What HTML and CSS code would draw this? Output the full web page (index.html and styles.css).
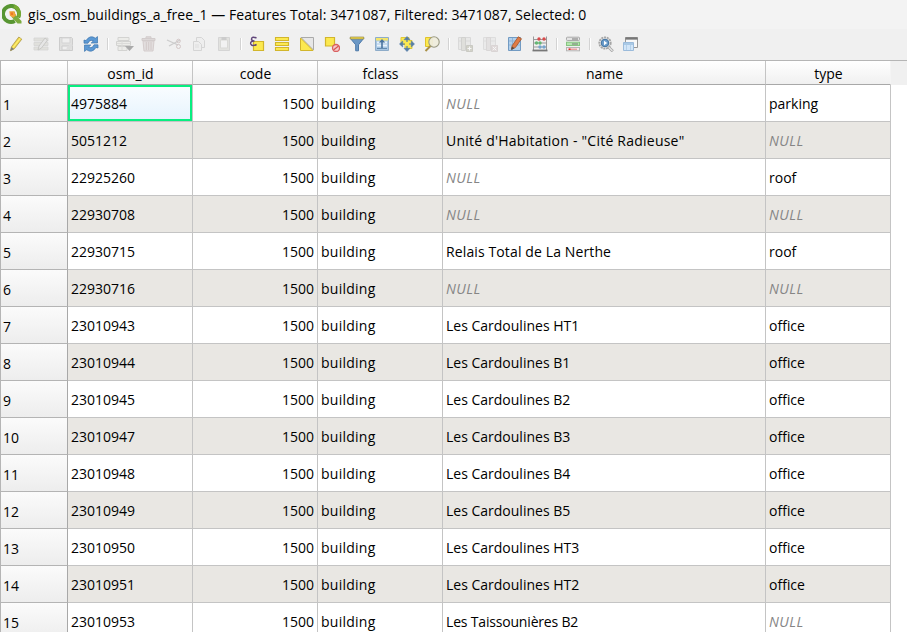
FILE: index.html
```
<!DOCTYPE html>
<html lang="en">
<head>
<meta charset="utf-8">
<title>gis_osm_buildings_a_free_1</title>
<link rel="stylesheet" href="styles.css">
</head>
<body>
<header class="titlebar">
<svg class="logo" width="20" height="20" viewBox="0 0 20 20"><path d="M16.2 13.5A8 8 0 1 0 12.8 17" fill="none" stroke="#589632" stroke-width="3.9"/><path d="M16.5 13A8 8 0 0 0 12 2.2" fill="none" stroke="#78aa35" stroke-width="3.5"/><path d="M8 8l5-.2-.3 2.2 6.8 7v2.5h-4L9.8 13.2z" fill="#7bab3e"/><path d="M7.3 7.3h5l1 2.5 1 1.2-3 2.8-3.4-2z" fill="#f1a23a"/><path d="M8.5 8.5h2.5v2.5H9z" fill="#ee7924"/></svg>
<h1>gis_osm_buildings_a_free_1 — Features Total: 3471087, Filtered: 3471087, Selected: 0</h1>
</header>
<nav class="toolbar">
<span class="tool"><svg viewBox="0 0 16 16"><path d="M2.5 14.7l1-4L10.8 1l3 2.2-7.4 9.5z" fill="#eed54b" stroke="#ab9745" stroke-width=".8"/><path d="M5 11.7l7.2-9.3" stroke="#fff071" stroke-width="1.2"/><path d="M2.3 15l1.1-4 2.7 2z" fill="#808078"/></svg></span>
<span class="tool off"><svg viewBox="0 0 16 16"><path d="M1 2h14v3H1zM1 6.5h14v3H1zM1 11h14v3H1z" fill="#d2d2c9" stroke="#bbb" stroke-width=".8"/><path d="M5 14l1-4 6-8 2.5 2-6 8z" fill="#ddd" stroke="#a2a29d"/></svg></span>
<span class="tool off"><svg viewBox="0 0 16 16"><path d="M1.5 1.5h12l1 1v12h-13z" fill="#d1d1cf" stroke="#aaa"/><path d="M4 2h8v5H4z" fill="#eee" stroke="#bbb"/><path d="M4 10h7v4H4z" fill="#eee" stroke="#aaa"/><path d="M8 14l1-3 4-3 2 1-4 5z" fill="#ccc"/></svg></span>
<span class="tool"><svg viewBox="0 0 16 16"><path d="M1 7.2V4L3 4.6Q7-1.6 12.4 2.2L14.5.6V7H8.2l2.2-2.1Q6.5 3.2 5 7.2z" fill="#5c99d4" stroke="#3d76ae" stroke-width=".7"/><path d="M15 8.8V12l-2-.6Q9 17.6 3.6 13.8L1.5 15.4V9h6.3l-2.2 2.1q3.9 1.7 5.4-2.3z" fill="#5c99d4" stroke="#3d76ae" stroke-width=".7"/></svg></span>
<i class="sep"></i>
<span class="tool off"><svg viewBox="0 0 16 16"><path d="M2 1.5h11v3H2zM.5 5.5h14v4H.5zM2 10.5h9v4H2z" fill="#e9e9e4" stroke="#b8b8b4"/><path d="M6 5v9M1 7.5h13" stroke="#c8c8c4"/></svg><svg class="caret" viewBox="0 0 9 6"><path d="M0 0h9L4.5 5z" fill="#666"/></svg></span>
<span class="tool off"><svg viewBox="0 0 16 16"><path d="M2 5h11l-1 10H3z" fill="#d5cdcd" stroke="#b9a9a9"/><path d="M1 2.5h13v2H1zM5 2V.8h5V2" fill="#ccc1c1" stroke="#b5a9a9"/><path d="M5.3 6v8M7.7 6v8M10 6v8" stroke="#b5a4a4"/></svg></span>
<span class="tool off"><svg viewBox="0 0 16 16"><path d="M1 4l11 5M3 10l11-6" stroke="#aaa" stroke-width="1.3"/><circle cx="12.5" cy="5" r="1.8" fill="none" stroke="#b8a0a0"/><circle cx="12.5" cy="10.5" r="2" fill="none" stroke="#b8a0a0"/></svg></span>
<span class="tool off"><svg viewBox="0 0 16 16"><path d="M5.5 1.5h5l3 3v7h-8z" fill="#eee" stroke="#bbb"/><path d="M2.5 5.5h5l3 3v6h-8z" fill="#eee" stroke="#bbb"/><path d="M4 9h4M4 11h4" stroke="#ccc"/></svg></span>
<span class="tool off"><svg viewBox="0 0 16 16"><path d="M2.5 1.5h11v13h-11z" fill="#d5d5cf" stroke="#bbb"/><path d="M4.5 4h7v8h-7z" fill="#f4f4f4" stroke="#c5c5c0"/><path d="M5.5 1h5v3h-5z" fill="#aaa"/></svg></span>
<i class="sep"></i>
<span class="tool"><svg viewBox="0 0 16 16"><path d="M4.5 5.5h10v9h-10z" fill="#fce94f" stroke="#d2b62c" stroke-width="1.2"/><path d="M7.5 2Q3 0 2.5 3q0 2 3 2Q1 5 1.8 8q1.2 2.8 5.8.5" fill="none" stroke="#60467a" stroke-width="1.5"/></svg></span>
<span class="tool"><svg viewBox="0 0 16 16"><path d="M1.5 1.5h13v3h-13zM1.5 6.5h13v3h-13zM1.5 11.5h13v3h-13z" fill="#fce94f" stroke="#d2b62c" stroke-width="1.1"/></svg></span>
<span class="tool"><svg viewBox="0 0 16 16"><path d="M2 1.5h12.5V14z" fill="#e7e7e7" stroke="#aaa"/><path d="M1.5 2v12.5H14z" fill="#fce94f" stroke="#d2b62c"/></svg></span>
<span class="tool"><svg viewBox="0 0 16 16"><path d="M1.5 1.5h9v8.5h-9z" fill="#fce94f" stroke="#d2b62c" stroke-width="1.2"/><circle cx="12" cy="12" r="3.5" fill="#f4caca" stroke="#d96060" stroke-width="1.3"/><path d="M9.5 14l5-4" stroke="#d65454" stroke-width="1.3"/></svg></span>
<span class="tool"><svg viewBox="0 0 16 16"><path d="M1 2l5.7 6.8v6h2.8v-6L15 2z" fill="#6b98c6" stroke="#4d79a9"/><path d="M1.2 1h13.6v2H1.2z" fill="#f3da45" stroke="#92884e" stroke-width=".7"/></svg></span>
<span class="tool"><svg viewBox="0 0 16 16"><path d="M1.5 1.5h13v13h-13z" fill="#a7c6e4" stroke="#8eacc9"/><path d="M2 2h12v2.5H2z" fill="#f4e56b"/><path d="M3 6.5h10M3 9.5h10" stroke="#e9f3fb" stroke-width="1.8"/><path d="M7.2 12V6.5H4.8L8 3l3.2 3.5H8.8V12z" fill="#49739f"/><path d="M3 12.5h10" stroke="#648caf"/></svg></span>
<span class="tool"><svg viewBox="0 0 16 16"><path d="M2 1.5h8v3h3v8H6v-4H2z" fill="#fce94f" stroke="#e0c936"/><path d="M8 .5l3 3.2H5zM8 15.5l3-3.2H5zM.5 8l3.2-3v6zM15.5 8l-3.2-3v6z" fill="#547da8" stroke="#547da8" stroke-width=".6"/><path d="M8 3v10M3 8h10" stroke="#547da8" stroke-width="1.2"/><path d="M6 6h4v4H6z" fill="#fce94f"/></svg></span>
<span class="tool"><svg viewBox="0 0 16 16"><path d="M1.5 1.5h7v9h-7z" fill="#fce94f" stroke="#e0c22c"/><path d="M6.5 10L1.5 15" stroke="#a99046" stroke-width="2"/><circle cx="10" cy="6" r="5.2" fill="#eeecdc" fill-opacity=".95" stroke="#999983" stroke-width="1.1"/></svg></span>
<i class="sep"></i>
<span class="tool off"><svg viewBox="0 0 16 16"><path d="M1.5 1.5h12v12h-12zM2 5h11" fill="#e2e2e0" stroke="#c4c4c4"/><path d="M4.5 1.5h4v13h-4z" fill="#cfcfc7" stroke="#b4b4b0"/><path d="M9.5 9.5h6v6h-6z" fill="#b5b5a4" stroke="#a5a598"/><path d="M12.5 10.5v4M10.5 12.5h4" stroke="#fff"/></svg></span>
<span class="tool off"><svg viewBox="0 0 16 16"><path d="M1.5 1.5h12v12h-12zM2 5h11" fill="#e6e6e6" stroke="#ccc"/><path d="M4.5 1.5h4v13h-4z" fill="#d8d4d4" stroke="#c4bfbf"/><path d="M9.5 9.5h6v6h-6z" fill="#cfc3c3" stroke="#c4b9b9"/><path d="M10.8 10.8l3.5 3.5M14.3 10.8l-3.5 3.5" stroke="#fff"/></svg></span>
<span class="tool"><svg viewBox="0 0 16 16"><path d="M1.5 1.5h12v13h-12z" fill="#b2d0ec" stroke="#729bc3"/><path d="M5.5 2v12M2 5h11M2 9h11" stroke="#8fb3d6"/><path d="M4.5 13l.7-3.3L11.3.8l3.2 2L8.3 11.6z" fill="#e07b45" stroke="#a75930" stroke-width=".9"/><path d="M4 14.2l.9-3.6 2.6 1.6z" fill="#554b46"/></svg></span>
<span class="tool"><svg viewBox="0 0 16 16"><path d="M1.5.5v14h13V.5M1 3.5h14M1 7h14M1 11h14" fill="none" stroke="#999"/><path d="M.5 14.5h15" stroke="#777" stroke-width="1.8"/><g fill="#d84a4a"><circle cx="7" cy="3" r="1.7"/><circle cx="12" cy="3" r="1.7"/></g><g fill="#65b774"><circle cx="4.5" cy="7" r="1.7"/><circle cx="8" cy="7" r="1.7"/></g><g fill="#77a5cf"><circle cx="8" cy="11" r="1.7"/><circle cx="12" cy="11" r="1.7"/></g></svg></span>
<i class="sep"></i>
<span class="tool"><svg viewBox="0 0 16 16"><rect x="1.5" y="1.2" width="13" height="3.3" rx=".8" fill="#e4e4e4" stroke="#aaa"/><rect x="1.5" y="6.2" width="13" height="3.3" fill="#b5e6af" stroke="#86c480"/><rect x="1.5" y="11.5" width="13" height="3.3" fill="#f6eaea" stroke="#b5b5b5"/><path d="M7 3h6M7 8h6" stroke="#777" stroke-width="1.2"/><path d="M4 13.2h8" stroke="#e88080" stroke-width="1"/><path d="M3.5 13.2h2" stroke="#d22" stroke-width="1.4"/></svg></span>
<i class="sep"></i>
<span class="tool"><svg viewBox="0 0 16 16"><circle cx="7" cy="7" r="5.7" fill="#e7e7e7" stroke="#a5a5a5" stroke-width="1.8" stroke-dasharray="2 .8"/><circle cx="7" cy="7" r="3.8" fill="#6a9ccb" stroke="#41719e"/><path d="M6 4.8v4.4L9.2 7z" fill="#fff"/><path d="M10.5 11l4.3 4.3" stroke="#a5a5a5" stroke-width="2.8"/><path d="M10.8 11.3l3.6 3.6" stroke="#eee" stroke-width="1.2"/></svg></span>
<span class="tool"><svg viewBox="0 0 16 16"><path d="M2.5 1.5h12v10h-12z" fill="#f8f8f8" stroke="#999"/><path d="M2.5 2.5h12" stroke="#777" stroke-width="2.3"/><path d="M.5 6.5h10v8H.5z" fill="#d1e5f8" stroke="#9bbbdb"/><path d="M1 8h9" stroke="#9bbfe1" stroke-width="1.5"/><path d="M3.5 9v5M7.5 9v5" stroke="#b5d0e8"/></svg></span>
</nav>
<main class="view">
<table>
<colgroup><col class="c-num"><col class="c-std"><col class="c-std"><col class="c-std"><col class="c-name"><col class="c-std"></colgroup>
<thead><tr><th></th><th>osm_id</th><th>code</th><th>fclass</th><th>name</th><th>type</th></tr></thead>
<tbody>
<tr><th>1</th><td class="current">4975884</td><td class="code">1500</td><td class="fclass">building</td><td class="null">NULL</td><td>parking</td></tr>
<tr><th>2</th><td>5051212</td><td class="code">1500</td><td class="fclass">building</td><td class="wide">Unité d'Habitation - "Cité Radieuse"</td><td class="null">NULL</td></tr>
<tr><th>3</th><td>22925260</td><td class="code">1500</td><td class="fclass">building</td><td class="null">NULL</td><td>roof</td></tr>
<tr><th>4</th><td>22930708</td><td class="code">1500</td><td class="fclass">building</td><td class="null">NULL</td><td class="null">NULL</td></tr>
<tr><th>5</th><td>22930715</td><td class="code">1500</td><td class="fclass">building</td><td class="loose">Relais Total de La Nerthe</td><td>roof</td></tr>
<tr><th>6</th><td>22930716</td><td class="code">1500</td><td class="fclass">building</td><td class="null">NULL</td><td class="null">NULL</td></tr>
<tr><th>7</th><td>23010943</td><td class="code">1500</td><td class="fclass">building</td><td>Les Cardoulines HT1</td><td>office</td></tr>
<tr><th>8</th><td>23010944</td><td class="code">1500</td><td class="fclass">building</td><td>Les Cardoulines B1</td><td>office</td></tr>
<tr><th>9</th><td>23010945</td><td class="code">1500</td><td class="fclass">building</td><td>Les Cardoulines B2</td><td>office</td></tr>
<tr><th>10</th><td>23010947</td><td class="code">1500</td><td class="fclass">building</td><td>Les Cardoulines B3</td><td>office</td></tr>
<tr><th>11</th><td>23010948</td><td class="code">1500</td><td class="fclass">building</td><td>Les Cardoulines B4</td><td>office</td></tr>
<tr><th>12</th><td>23010949</td><td class="code">1500</td><td class="fclass">building</td><td>Les Cardoulines B5</td><td>office</td></tr>
<tr><th>13</th><td>23010950</td><td class="code">1500</td><td class="fclass">building</td><td>Les Cardoulines HT3</td><td>office</td></tr>
<tr><th>14</th><td>23010951</td><td class="code">1500</td><td class="fclass">building</td><td>Les Cardoulines HT2</td><td>office</td></tr>
<tr><th>15</th><td>23010953</td><td class="code">1500</td><td class="fclass">building</td><td class="tight">Les Taissounières B2</td><td class="null">NULL</td></tr>
</tbody>
</table>
</main>
</body>
</html>
```
FILE: styles.css
```
* { box-sizing: border-box; }
body {
  margin: 0;
  height: 632px;
  overflow: hidden;
  background: #f0f0f0;
  color: #000;
  font: 14px/20px "Open Sans", "Noto Sans", sans-serif;
}
.titlebar {
  display: flex;
  align-items: center;
  height: 29px;
  padding-left: 2px;
  background: #f3f3f3;
}
.logo { margin-top: -2px; }
h1 {
  margin: 0 0 0 6px;
  font-size: 14px;
  font-weight: 400;
  white-space: nowrap;
  letter-spacing: 0.07px;
}
.toolbar {
  display: flex;
  align-items: center;
  height: 31px;
  padding: 0 0 1px 3px;
}
.tool {
  display: flex;
  position: relative;
  justify-content: center;
  width: 25px;
}
.tool svg { width: 16px; height: 16px; }
.tool.off { opacity: .5; }
.tool .caret { position: absolute; right: 2px; bottom: 0; width: 9px; height: 6px; }
.sep { width: 8px; height: 12px; background: linear-gradient(#d3d3d3, #d3d3d3) 4px 0 / 1px 100% no-repeat, linear-gradient(#fff, #fff) 5px 0 / 1px 100% no-repeat; }
.view {
  height: 572px;
  overflow: hidden;
  border-top: 1px solid #b5b5b5;
  background: linear-gradient(#f0f0f0 24px, #fff 24px);
}
table {
  width: 891px;
  table-layout: fixed;
  border-collapse: separate;
  border-spacing: 0;
}
.c-num { width: 68px; }
.c-std { width: 125px; }
.c-name { width: 323px; }
th, td {
  height: 37px;
  padding: 2px 3px 0;
  border-right: 1px solid #c4c4c4;
  border-bottom: 1px solid #c4c4c4;
  font-weight: 400;
  text-align: left;
  white-space: nowrap;
}
thead th {
  height: 24px;
  padding: 2px 2px 0 3px;
  background: linear-gradient(#fff, #f0f0f0);
  border-bottom-color: #a8a8a8;
  text-align: center;
}
thead th:last-child { border-right-color: #f4f4f4; }
tbody th {
  padding-top: 3px;
  background: linear-gradient(#fbfbfb, #ededed);
  border-right-color: #a8a8a8;
  border-bottom-color: #b4b4b4;
}
th:first-child { border-left: 1px solid #b5b5b5; padding-left: 2px; }
td { background: #fff; }
tr:nth-child(even) td { background: #e9e7e3; }
.code { text-align: right; }
.fclass { letter-spacing: 0.25px; }
.wide { letter-spacing: 0.23px; }
.loose { letter-spacing: 0.12px; }
.tight { letter-spacing: -0.18px; }
tbody .null { color: #858585; font-style: italic; letter-spacing: 0.5px; }
tbody td.current {
  background: linear-gradient(#fafdff, #e6f3fd);
  box-shadow: inset 0 0 0 2px #08ee80;
}
```
